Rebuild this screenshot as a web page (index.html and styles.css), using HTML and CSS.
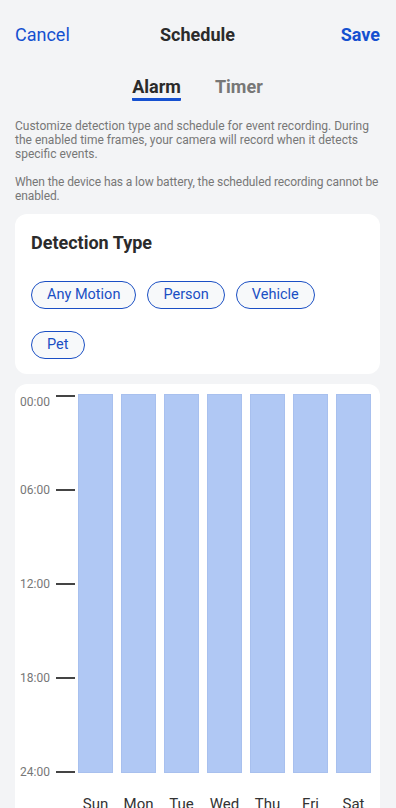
FILE: index.html
```html
<!DOCTYPE html>
<html lang="en">
	<head>
		<meta charset="UTF-8" />
		<meta name="viewport" content="width=device-width, initial-scale=1.0" />
		<title>Schedule</title>
		<link rel="stylesheet" href="styles.css">
	</head>
	<body>
		<header class="topbar">
			<a class="topbar-link">Cancel</a>
			<h1 class="topbar-title">Schedule</h1>
			<a class="topbar-link topbar-save">Save</a>
		</header>

		<nav class="tabs">
			<span class="tab tab-active">Alarm</span>
			<span class="tab">Timer</span>
		</nav>

		<div class="intro">
			<p>Customize detection type and schedule for event recording. During the enabled time frames, your camera will record when it detects specific events.</p>
			<p class="intro-note">When the device has a low battery, the scheduled recording cannot be enabled.</p>
		</div>

		<section class="card detection">
			<h2 class="card-title">Detection Type</h2>
			<div class="chips">
				<span class="chip">Any Motion</span>
				<span class="chip">Person</span>
				<span class="chip">Vehicle</span>
				<span class="chip">Pet</span>
			</div>
		</section>

		<section class="card chart">
			<div class="axis">
				<div class="axis-row axis-first"><span class="axis-label">00:00</span><span class="tick"></span></div>
				<div class="axis-row"><span class="axis-label">06:00</span><span class="tick"></span></div>
				<div class="axis-row"><span class="axis-label">12:00</span><span class="tick"></span></div>
				<div class="axis-row"><span class="axis-label">18:00</span><span class="tick"></span></div>
				<div class="axis-row"><span class="axis-label">24:00</span><span class="tick"></span></div>
			</div>
			<div class="days">
				<div class="day"><div class="bar"></div><span class="day-name">Sun</span></div>
				<div class="day"><div class="bar"></div><span class="day-name">Mon</span></div>
				<div class="day"><div class="bar"></div><span class="day-name">Tue</span></div>
				<div class="day"><div class="bar"></div><span class="day-name">Wed</span></div>
				<div class="day"><div class="bar"></div><span class="day-name">Thu</span></div>
				<div class="day"><div class="bar"></div><span class="day-name">Fri</span></div>
				<div class="day"><div class="bar"></div><span class="day-name">Sat</span></div>
			</div>
		</section>
	</body>
</html>
```

FILE: styles.css
```css
body {
	font-family: Roboto, 'Noto Sans', sans-serif;
	background-color: #f3f4f6;
	margin: 0;
	padding: 0 16px 0 15px;
	color: #2b2b2b;
	overflow: hidden;
	height: 808px;
}
.topbar {
	display: grid;
	grid-template-columns: 1fr auto 1fr;
	align-items: center;
	padding-top: 24px;
	height: 22px;
}
.topbar-link {
	font-size: 18px;
	line-height: 22px;
	color: #1550d0;
}
.topbar-save {
	font-weight: bold;
	justify-self: end;
}
.topbar-title {
	margin: 0;
	font-size: 18px;
	line-height: 22px;
	font-weight: bold;
	color: #2b2b2b;
}
.tabs {
	display: flex;
	justify-content: center;
	gap: 34px;
	margin-top: 30px;
}
.tab {
	font-size: 18px;
	line-height: 22px;
	font-weight: bold;
	color: #777;
	padding-bottom: 3px;
}
.tab-active {
	color: #2b2b2b;
	border-bottom: 3px solid #1550d0;
	padding-bottom: 0;
	border-radius: 1px;
}
.intro {
	margin-top: 18px;
	margin-right: -4px;
	font-size: 12px;
	line-height: 14px;
	color: #777;
}
.intro p {
	margin: 0 0 14px;
}
.intro p:last-child {
	margin-bottom: 0;
}
.intro-note {
	letter-spacing: -0.1px;
}
.card {
	background-color: #fff;
	border-radius: 12px;
}
.detection {
	margin-top: 11px;
	padding: 18px 16px 15px;
}
.card-title {
	margin: 0;
	font-size: 18px;
	line-height: 22px;
	font-weight: bold;
	color: #2b2b2b;
}
.chips {
	display: flex;
	flex-wrap: wrap;
	gap: 22px 11px;
	margin-top: 27px;
}
.chip {
	box-sizing: border-box;
	height: 28px;
	padding: 0 15px;
	border: 1.5px solid #1a4fc4;
	border-radius: 14px;
	background-color: #f7f9fa;
	color: #1a4fc4;
	font-size: 14.5px;
	line-height: 25px;
}
.chart {
	margin-top: 10px;
	display: flex;
	align-items: flex-start;
	padding: 5px 9px 0 5px;
	border-radius: 12px 12px 0 0;
}
.axis {
	display: flex;
	flex-direction: column;
	justify-content: space-between;
	height: 390px;
	width: 58px;
	flex-shrink: 0;
}
.axis-row {
	display: flex;
	align-items: center;
	height: 14px;
}
.axis-first {
	align-items: flex-start;
}
.axis-first .axis-label {
	margin-top: 6px;
}
.axis-first .tick {
	margin-top: 6px;
}
.axis-label {
	width: 36px;
	font-size: 12px;
	line-height: 14px;
	color: #777;
}
.tick {
	width: 19px;
	height: 1.5px;
	background-color: #444;
}
.days {
	display: flex;
	gap: 8px;
	flex: 1;
	margin-top: 5px;
}
.day {
	flex: 1;
	display: flex;
	flex-direction: column;
	align-items: center;
	gap: 22px;
}
.bar {
	align-self: stretch;
	flex-shrink: 0;
	height: 379px;
	background-color: #b0c8f4;
	box-shadow: inset 0 0 0 1px #a8c0ee;
}
.day-name {
	font-size: 15px;
	line-height: 18px;
	color: #333;
}
```
